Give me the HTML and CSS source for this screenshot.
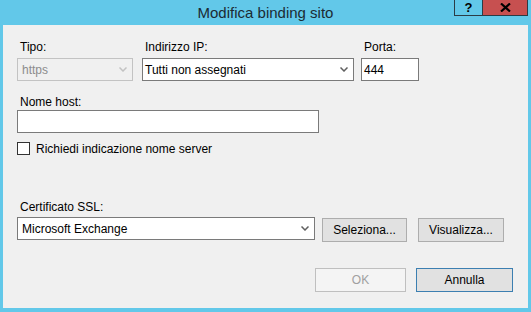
FILE: index.html
```html
<!DOCTYPE html>
<html lang="it">
<head>
<meta charset="UTF-8">
<title>Modifica binding sito</title>
<link rel="stylesheet" href="styles.css">
</head>
<body>
	<div class="window">
		<div class="titlebar">
			<div class="title">Modifica binding sito</div>
			<div class="caption">
				<span class="cap-help">?</span>
				<span class="cap-close">
					<svg width="11" height="9" viewBox="0 0 11 9"><path d="M1 0.5 L10 8.5 M10 0.5 L1 8.5" stroke="#000" stroke-width="2.2" fill="none"/></svg>
				</span>
			</div>
		</div>
		<div class="client">
			<div class="row-top">
				<div class="field">
					<div class="lbl">Tipo:</div>
					<div class="combo combo-type is-disabled">
						<span>https</span>
						<svg class="chev" width="8" height="5" viewBox="0 0 8 5"><path d="M0.5 0.5 L4 4 L7.5 0.5" stroke="#c2c2c2" stroke-width="1.5" fill="none"/></svg>
					</div>
				</div>
				<div class="field">
					<div class="lbl">Indirizzo IP:</div>
					<div class="combo combo-ip">
						<span>Tutti non assegnati</span>
						<svg class="chev" width="8" height="5" viewBox="0 0 8 5"><path d="M0.5 0.5 L4 4 L7.5 0.5" stroke="#5f5f5f" stroke-width="1.5" fill="none"/></svg>
					</div>
				</div>
				<div class="field">
					<div class="lbl">Porta:</div>
					<div class="textbox tb-port">444</div>
				</div>
			</div>

			<div class="field host">
				<div class="lbl">Nome host:</div>
				<div class="textbox tb-host"></div>
			</div>

			<div class="check-row">
				<span class="checkbox"></span>
				<span class="check-lbl">Richiedi indicazione nome server</span>
			</div>

			<div class="cert">
				<div class="lbl">Certificato SSL:</div>
				<div class="cert-row">
					<div class="combo combo-cert">
						<span>Microsoft Exchange</span>
						<svg class="chev" width="8" height="5" viewBox="0 0 8 5"><path d="M0.5 0.5 L4 4 L7.5 0.5" stroke="#5f5f5f" stroke-width="1.5" fill="none"/></svg>
					</div>
					<div class="btn btn-sel">Seleziona...</div>
					<div class="btn btn-view">Visualizza...</div>
				</div>
			</div>

			<div class="footer">
				<div class="btn btn-ok is-disabled">OK</div>
				<div class="btn btn-cancel">Annulla</div>
			</div>
		</div>
	</div>
</body>
</html>
```

FILE: styles.css
```css
body {
	margin: 0;
	background-color: #62c8e9;
	font-family: "Liberation Sans", Arial, sans-serif;
	font-size: 12px;
	color: #000;
}
.window {
	width: 531px;
	height: 312px;
	background-color: #62c8e9;
	display: flex;
	flex-direction: column;
}
.titlebar {
	height: 25px;
	position: relative;
	flex-shrink: 0;
}
.title {
	text-align: center;
	font-size: 15px;
	line-height: 25px;
	color: #1b2b33;
	padding-left: 0px;
}
.caption {
	position: absolute;
	top: 0;
	right: 3px;
	display: flex;
}
.cap-help {
	width: 27px;
	height: 15px;
	border: 1px solid #2b3c46;
	border-top: none;
	font-weight: bold;
	font-size: 13px;
	line-height: 15px;
	text-align: center;
	box-sizing: content-box;
}
.cap-close {
	width: 44px;
	height: 15px;
	background-color: #c75050;
	border: 1px solid #2b3c46;
	border-top: none;
	border-left: none;
	display: flex;
	align-items: center;
	justify-content: center;
}
.client {
	flex: 1;
	margin: 0 3px 4px 3px;
	background-color: #f0f0f0;
	padding: 15px 15px 0 14px;
}
.lbl {
	height: 15px;
	line-height: 15px;
	padding-left: 3px;
}
.row-top {
	display: flex;
	gap: 0;
}
.row-top .field:nth-child(1) {
	width: 116px;
	margin-right: 9px;
}
.row-top .field:nth-child(2) {
	width: 212px;
	margin-right: 7px;
}
.row-top .field:nth-child(3) {
	width: 58px;
}
.row-top .lbl {
	margin-bottom: 3px;
}
.combo,
.textbox {
	height: 23px;
	box-sizing: border-box;
	border: 1px solid #7a7a7a;
	background-color: #fff;
	display: flex;
	align-items: center;
	justify-content: space-between;
	padding: 0 5px 0 3px;
	white-space: nowrap;
}
.combo.is-disabled {
	border-color: #c3c3c3;
	background-color: #f0f0f0;
	color: #8c8c8c;
}
.combo-type {
	padding-left: 4px;
}
.combo-ip {
	padding-left: 2px;
}
.tb-port {
	padding-left: 2px;
}
.host {
	margin-top: 14px;
}
.tb-host {
	width: 302px;
}
.check-row {
	margin-top: 9px;
	display: flex;
	align-items: center;
	height: 13px;
}
.checkbox {
	width: 13px;
	height: 13px;
	box-sizing: border-box;
	border: 1px solid #333;
	background-color: #fff;
	margin-right: 6px;
}
.cert {
	margin-top: 45px;
}
.cert .lbl {
	margin-bottom: 2px;
}
.cert-row {
	display: flex;
	align-items: flex-start;
}
.combo-cert {
	width: 298px;
	padding-left: 4px;
	margin-right: 7px;
}
.btn {
	height: 24px;
	box-sizing: border-box;
	border: 1px solid #adadad;
	background-color: #e1e1e1;
	display: flex;
	align-items: center;
	justify-content: center;
}
.btn-sel {
	width: 85px;
	margin-top: 1px;
	margin-right: 11px;
}
.btn-view {
	width: 86px;
	margin-top: 1px;
}
.footer {
	margin-top: 26px;
	display: flex;
	justify-content: flex-end;
	gap: 10px;
}
.btn-ok {
	width: 91px;
}
.btn.is-disabled {
	background-color: #f4f4f4;
	border-color: #bfbfbf;
	color: #a0a0a0;
}
.btn-cancel {
	width: 97px;
	border-color: #3c7fb1;
}
```
